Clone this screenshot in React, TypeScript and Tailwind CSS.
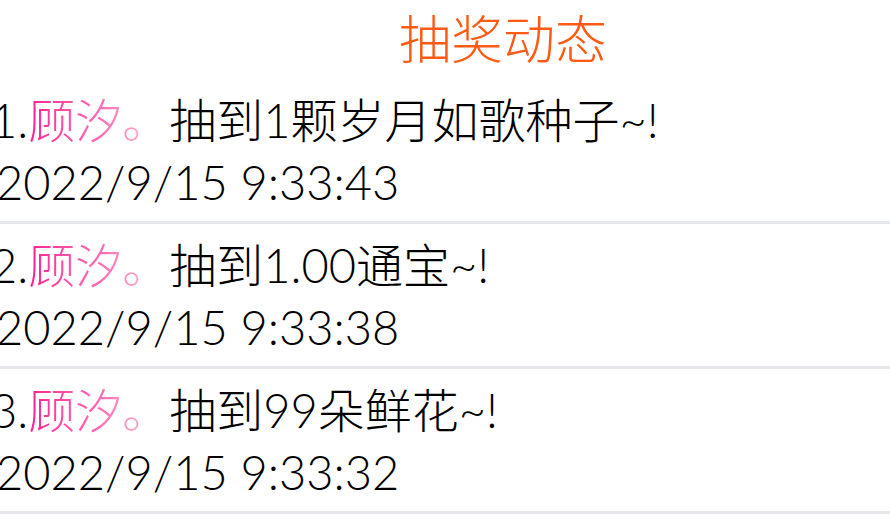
import React from 'react';

type Record = {
  name: string;
  prize: string;
  time: string;
};

const records: Record[] = [
  { name: '顾汐。', prize: '抽到1颗岁月如歌种子~!', time: '2022/9/15 9:33:43' },
  { name: '顾汐。', prize: '抽到1.00通宝~!', time: '2022/9/15 9:33:38' },
  { name: '顾汐。', prize: '抽到99朵鲜花~!', time: '2022/9/15 9:33:32' },
];

const App: React.FC = () => {
  return (
    <div
      className="w-[890px] h-[521px] overflow-hidden bg-white pt-[1px] text-black font-light"
      style={{ fontFamily: 'Lato, "Noto Sans CJK SC", sans-serif' }}
    >
      <div className="flex justify-center pl-[116px] text-[52px] leading-[76px] text-[#ff5b14]">
        抽奖动态
      </div>

      <ul className="-ml-[4px] mt-[12px]">
        {records.map((r, i) => (
          <li key={i} className="pb-[8px] pt-[10px] first:pt-0 border-b-[3px] border-[#e5e7eb] text-[47px] leading-[62px]">
            <div className="-ml-[6px] whitespace-nowrap">
              {i + 1}.
              <span className="bg-gradient-to-r from-[#ff1493] via-[#ff69b4] to-[#ffc8d4] bg-clip-text text-transparent">
                {r.name}
              </span>
              {r.prize}
            </div>
            <div className="whitespace-nowrap">{r.time}</div>
          </li>
        ))}
      </ul>
    </div>
  );
};

export default App;
